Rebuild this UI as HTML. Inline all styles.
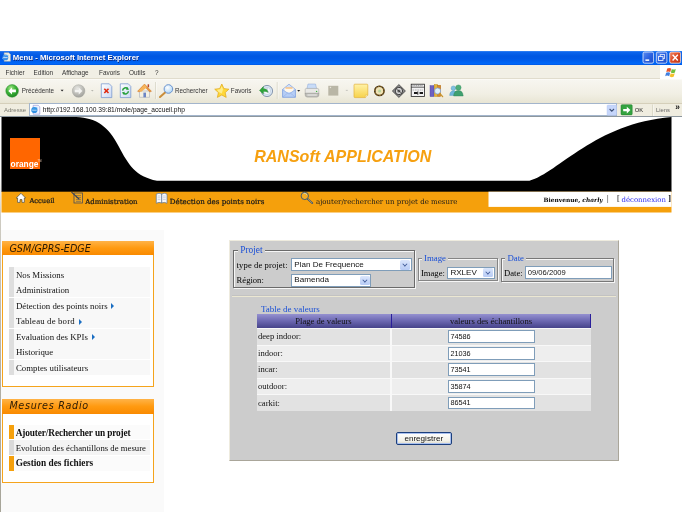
<!DOCTYPE html>
<html lang="fr">
<head>
<meta charset="utf-8">
<title>Menu - Microsoft Internet Explorer</title>
<style>
html,body{margin:0;padding:0;}
body{width:682px;height:512px;position:relative;overflow:hidden;background:#fff;font-family:"Liberation Sans",sans-serif;}
.a{position:absolute;white-space:nowrap;line-height:1;}
.sans{font-family:"Liberation Sans","DejaVu Sans",sans-serif;}
.serif{font-family:"Liberation Serif","DejaVu Serif",serif;}
#titlebar{left:0;top:50.5px;width:682px;height:14.9px;background:linear-gradient(#3a86f4 0,#0b64ec 1.5px,#0057e2 5px,#0059e6 8px,#0066f6 12px,#0068fa 13px,#0046cc 14.5px);}
#menubar{left:0;top:65.4px;width:682px;height:13.6px;background:#f1efe5;border-bottom:1px solid #e0dccd;box-sizing:border-box;}
#toolbar{left:0;top:79px;width:682px;height:24px;background:linear-gradient(#f7f6f0,#f1efe4 60%,#e8e5d4);border-top:1px solid #fbfaf6;box-sizing:border-box;}
#addrbar{left:0;top:103px;width:682px;height:14px;background:#f0ede0;border-top:1px solid #d5cfba;box-sizing:border-box;}
.mi{font-size:6.4px;color:#333;top:69.7px;}
.tb{font-size:6.3px;color:#333;top:88.4px;}

.nav{font-family:"DejaVu Serif","Liberation Serif",serif;font-size:7px;font-weight:normal;color:#1a1a1a;top:197.5px;-webkit-text-stroke:0.22px #1a1a1a;}
.box{border:1.2px solid #f5a41c;background:#fff;box-sizing:border-box;}
.boxh{background:linear-gradient(#ffb347 0,#ff9a10 50%,#f98a00 100%);}
.hand{font-family:"DejaVu Sans","Liberation Sans",sans-serif;font-style:italic;font-size:9.6px;color:#2a1a05;}
.sm{font-size:8.8px;color:#111;}
.arr{display:inline-block;width:0;height:0;margin-left:1.5px;border-left:3.2px solid #1b6ec2;border-top:3px solid transparent;border-bottom:3px solid transparent;vertical-align:-0.5px;}

.fs{border:1px solid #6a6a6a;box-shadow:1px 1px 0 #f6f6f6, inset 1px 1px 0 #f6f6f6;box-sizing:border-box;}
.lg{font-size:8.8px;color:#1a4fd6;background:#cccccc;padding:0 2px;}
.fl{font-size:8.6px;color:#000;}
.sel,.inp{background:#fff;border:1px solid #7f9db9;box-sizing:border-box;overflow:hidden;}
.st{position:absolute;left:1.8px;top:1.8px;font-family:"Liberation Sans",sans-serif;font-size:7.3px;color:#111;line-height:1;}
.sb{position:absolute;right:0.5px;top:0.5px;bottom:0.5px;width:10px;background:linear-gradient(#dbe6fb,#b7cbf5);border-radius:1.5px;}
.sb:after{content:"";position:absolute;left:3px;top:2.3px;width:2.8px;height:2.8px;border-right:1.2px solid #3a5594;border-bottom:1.2px solid #3a5594;transform:rotate(45deg) scale(0.9);}
.th{top:317px;font-size:8.6px;color:#111;text-align:center;}
.td{left:258px;font-size:8.6px;color:#111;}
.btn{background:linear-gradient(#fff,#f3f2ea 70%,#dcd8c8);border:1px solid #1c3f7c;border-radius:2px;box-sizing:border-box;box-shadow:inset 0 0 0 1px #a8c0f0;}
.btn span{position:absolute;left:0;right:0;top:1.8px;text-align:center;font-family:"Liberation Sans",sans-serif;font-size:8.1px;color:#111;line-height:1;}
#wrap{position:absolute;left:0;top:0;width:682px;height:512px;overflow:hidden;will-change:transform;transform:translateZ(0);}
</style>
</head>
<body>
<div id="wrap">
<!-- ============ IE chrome ============ -->
<div class="a" id="titlebar"></div>
<div class="a sans" style="left:12.8px;top:54.1px;font-size:7.75px;font-weight:bold;color:#fff;text-shadow:0.5px 0.5px 0 #0a2a80;">Menu - Microsoft Internet Explorer</div>
<div class="a" id="menubar"></div>
<div class="a sans mi" style="left:5.5px">Fichier</div>
<div class="a sans mi" style="left:33.6px">Edition</div>
<div class="a sans mi" style="left:62px">Affichage</div>
<div class="a sans mi" style="left:99px">Favoris</div>
<div class="a sans mi" style="left:129px">Outils</div>
<div class="a sans mi" style="left:155px">?</div>
<div class="a" style="left:660px;top:65px;width:22px;height:14px;background:#fff;"></div>
<div class="a" id="toolbar"></div>
<div class="a sans tb" style="left:21.8px">Précédente</div>
<div class="a sans tb" style="left:175px">Rechercher</div>
<div class="a sans tb" style="left:230.8px">Favoris</div>
<div class="a" id="addrbar"></div>
<div class="a sans" style="left:4px;top:107px;font-size:6px;color:#7a7a70;">Adresse</div>
<div class="a" style="left:29px;top:103.4px;width:588px;height:12.8px;background:#fff;border:1px solid #a3b5cc;box-sizing:border-box;"></div>
<div class="a sans" style="left:42.8px;top:106.6px;font-size:6.65px;color:#111;">http://192.168.100.39:81/mole/page_accueil.php</div>
<div class="a sans" style="left:634.8px;top:108.2px;font-size:5.8px;color:#222;">OK</div>
<div class="a sans" style="left:656px;top:108.2px;font-size:5.8px;color:#666;">Liens</div>
<div class="a sans" style="left:675.2px;top:102.6px;font-size:8.4px;font-weight:bold;color:#111;">»</div>



<!-- toolbar icons -->
<svg class="a" style="left:0;top:79px" width="682" height="38" viewBox="0 79 682 38">
  <defs>
    <radialGradient id="gback" cx="40%" cy="30%" r="70%"><stop offset="0" stop-color="#a8e88a"/><stop offset="0.5" stop-color="#3fb53a"/><stop offset="1" stop-color="#1f8a24"/></radialGradient>
    <radialGradient id="gfwd" cx="40%" cy="30%" r="70%"><stop offset="0" stop-color="#e6e6e2"/><stop offset="0.6" stop-color="#bdbdb8"/><stop offset="1" stop-color="#a2a29c"/></radialGradient>
    <linearGradient id="gpage" x1="0" y1="0" x2="1" y2="1"><stop offset="0" stop-color="#fff"/><stop offset="1" stop-color="#c9d8f5"/></linearGradient>
    <linearGradient id="gnote" x1="0" y1="0" x2="0" y2="1"><stop offset="0" stop-color="#fff2a8"/><stop offset="1" stop-color="#f7d24a"/></linearGradient>
    <radialGradient id="glens" cx="40%" cy="35%" r="70%"><stop offset="0" stop-color="#fff"/><stop offset="1" stop-color="#a9d3f5"/></radialGradient>
  </defs>
  <!-- back -->
  <circle cx="12.1" cy="90.9" r="6.3" fill="url(#gback)" stroke="#2c8a2c" stroke-width="0.5"/>
  <path d="M8.3,90.9 L12,87.4 L12,89.6 L15.9,89.6 L15.9,92.2 L12,92.2 L12,94.4 Z" fill="#fff"/>
  <path d="M60.6,89.8 h3 l-1.5,1.8 z" fill="#222"/>
  <!-- forward -->
  <circle cx="78.6" cy="91" r="6.3" fill="url(#gfwd)" stroke="#a6a6a0" stroke-width="0.5"/>
  <path d="M82.4,91 L78.7,87.5 L78.7,89.7 L74.8,89.7 L74.8,92.3 L78.7,92.3 L78.7,94.5 Z" fill="#f4f4f2"/>
  <path d="M91,90 h2.6 l-1.3,1.5 z" fill="#b5b5ad"/>
  <!-- stop -->
  <path d="M101.3,83.8 h8 l2.5,2.6 v11.2 h-10.5 z" fill="url(#gpage)" stroke="#6d8fcc" stroke-width="0.7"/>
  <path d="M104.3,88.8 l4.2,4.2 M108.5,88.8 l-4.2,4.2" stroke="#e02a10" stroke-width="1.6"/>
  <!-- refresh -->
  <path d="M120.3,83.8 h8 l2.5,2.6 v11.2 h-10.5 z" fill="url(#gpage)" stroke="#6d8fcc" stroke-width="0.7"/>
  <path d="M122.6,90.6 a3,3 0 0 1 5.2,-1.8 M128.4,91.2 a3,3 0 0 1 -5.2,1.8" fill="none" stroke="#27a03a" stroke-width="1.5"/>
  <path d="M127,87 l2.2,2.4 l-3,0.6 z M124,94.8 l-2.2,-2.4 l3,-0.6 z" fill="#27a03a"/>
  <!-- home -->
  <path d="M139.5,91 h10 v6.3 h-10 z" fill="#f4f1e4" stroke="#9aa0b0" stroke-width="0.5"/>
  <path d="M137.5,91.3 L144.5,84 L151.5,91.3 L149.8,92 L144.5,86.6 L139.2,92 Z" fill="#e9953a" stroke="#c36a1c" stroke-width="0.4"/>
  <path d="M138.4,91 L144.5,84.6 L147,87.2 L141,92 Z" fill="#f6b45a"/>
  <rect x="143.4" y="92.6" width="2.6" height="4.7" fill="#6d86c4"/>
  <rect x="147.6" y="84.3" width="1.5" height="3" fill="#b8482a"/>
  <path d="M155.5,82 v17" stroke="#c9c5b2" stroke-width="0.7"/>
  <path d="M156.2,82 v17" stroke="#fff" stroke-width="0.6"/>
  <!-- search -->
  <path d="M165.4,92.2 L160,97" stroke="#c98d3a" stroke-width="2" stroke-linecap="round"/>
  <circle cx="168.4" cy="89" r="4.3" fill="url(#glens)" stroke="#6a93cf" stroke-width="1"/>
  <!-- star -->
  <path d="M221.8,84 L223.9,88.6 L228.9,89.2 L225.2,92.6 L226.2,97.4 L221.8,95 L217.4,97.4 L218.4,92.6 L214.7,89.2 L219.7,88.6 Z" fill="#ffd83a" stroke="#e0a818" stroke-width="0.7" stroke-linejoin="round"/>
  <path d="M221.8,86 L223,89.4 L221.8,93.5 L218.6,92 L217,89.8 L220.3,89.3 Z" fill="#fff2a0" opacity="0.8"/>
  <!-- history/media -->
  <circle cx="267" cy="91" r="5.6" fill="#d8e6f4" stroke="#7d8fa8" stroke-width="0.9"/>
  <circle cx="267" cy="91" r="3.6" fill="#f4f8fc" stroke="#9fb0c8" stroke-width="0.4"/>
  <path d="M267,88.2 V91 L269,92.4" stroke="#6c7f9c" stroke-width="0.6" fill="none"/>
  <path d="M259.4,90.4 L263.4,86.6 L263.4,88.8 Q267.4,88.4 267.8,92.4 Q266,90.9 263.4,91.6 L263.4,94 Z" fill="#2fa53a" stroke="#1c7f28" stroke-width="0.3"/>
  <path d="M277.3,82 v17" stroke="#c9c5b2" stroke-width="0.7"/>
  <path d="M278,82 v17" stroke="#fff" stroke-width="0.6"/>
  <!-- mail -->
  <path d="M282.6,89.4 L289,84.2 L295.4,89.4 V97.2 H282.6 Z" fill="#cfe0fa" stroke="#7f9fdc" stroke-width="0.7" stroke-linejoin="round"/>
  <path d="M284.6,88 h8.8 v4 h-8.8 z" fill="#fff8ec"/>
  <path d="M285.5,87.2 h7 v1.6 h-7 z" fill="#f6c48a"/>
  <path d="M282.6,89.6 L289,94 L295.4,89.6 V97.2 H282.6 Z" fill="#b6cef6" stroke="#7f9fdc" stroke-width="0.6" stroke-linejoin="round"/>
  <path d="M282.8,97 L287.6,93.1 M295.2,97 L290.4,93.1" stroke="#8eaae2" stroke-width="0.5"/>
  <path d="M297.2,90 h3 l-1.5,1.8 z" fill="#222"/>
  <!-- printer -->
  <path d="M308,84 h7.5 l1.2,5 h-9.8 z" fill="#c9dcf7" stroke="#88a4d6" stroke-width="0.5"/>
  <path d="M305.2,89.6 q0,-1.2 1.4,-1.2 h10.6 q1.6,0 1.6,1.4 v4 h-13.6 z" fill="#e9e9e6" stroke="#9c9c98" stroke-width="0.5"/>
  <path d="M305.2,93.2 h13.6 v2 q0,1.6 -2,1.9 h-9.4 q-2.2,-0.2 -2.2,-2 z" fill="#bdbdb8" stroke="#8e8e8a" stroke-width="0.5"/>
  <path d="M307.4,95 h9.4" stroke="#f6f6f4" stroke-width="0.9"/>
  <circle cx="316.6" cy="91.4" r="0.7" fill="#40b040"/>
  <!-- edit (disabled) -->
  <rect x="328.3" y="85.8" width="10" height="9.8" fill="#b9b6a6"/>
  <rect x="329.8" y="86.8" width="1.3" height="1.3" fill="#e8e6dc"/>
  <path d="M345.8,90.4 h2" stroke="#b5b5ad" stroke-width="0.7"/>
  <!-- note -->
  <path d="M354.8,84.2 h12.2 q0.8,0 0.8,0.8 v10.2 l-2.4,2.4 h-10.6 q-0.8,0 -0.8,-0.8 v-11.8 q0,-0.8 0.8,-0.8 z" fill="url(#gnote)" stroke="#e2b23a" stroke-width="0.7"/>
  <path d="M365.4,97.4 v-2.2 h2.3" fill="#fffbe0" stroke="#d8a830" stroke-width="0.4"/>
  <!-- round -->
  <circle cx="379.4" cy="90.9" r="5.4" fill="#3a2a14"/>
  <circle cx="379.4" cy="90.9" r="3.8" fill="#efe2b4"/>
  <circle cx="379.4" cy="90.9" r="4.6" fill="none" stroke="#b88a2a" stroke-width="0.9" stroke-dasharray="1.6 1.2"/>
  <circle cx="379.6" cy="91" r="1.5" fill="#b5d6a0"/>
  <!-- diamond -->
  <path d="M398.9,84.6 L405.4,91 L398.9,97.4 L392.4,91 Z" fill="#8e8e8e" stroke="#3c3c3c" stroke-width="0.8"/>
  <circle cx="398.9" cy="91" r="3.7" fill="#d4d4d4" stroke="#2e2e2e" stroke-width="0.9"/>
  <circle cx="398.9" cy="91" r="1.6" fill="#666"/>
  <path d="M396,88.6 L401.8,93.4" stroke="#222" stroke-width="0.6"/>
  <!-- calendar-ish -->
  <rect x="411.2" y="84.2" width="13.2" height="12.2" fill="#f2f2f2" stroke="#222" stroke-width="0.8"/>
  <path d="M411.2,87.2 h13.2" stroke="#222" stroke-width="0.7"/>
  <path d="M412.4,85.7 h10.8" stroke="#8a8a8a" stroke-width="0.9" stroke-dasharray="1.2 0.6"/>
  <path d="M412.6,90 h10.4" stroke="#9a9a9a" stroke-width="0.7" stroke-dasharray="1.6 0.8"/>
  <path d="M414,93 h3.6 M419.6,93 h3.4" stroke="#1a1a1a" stroke-width="2"/>
  <path d="M417.8,91.4 v3.4" stroke="#1a1a1a" stroke-width="0.8"/>
  <!-- research (books+lens) -->
  <rect x="430" y="85.6" width="4" height="11" fill="#6e62c2" stroke="#4a3f9c" stroke-width="0.4"/>
  <rect x="434.2" y="84.4" width="3.4" height="12.2" fill="#e4b43a" stroke="#b98a1c" stroke-width="0.4"/>
  <rect x="437.8" y="85.2" width="3" height="11.4" fill="#d98a2a" stroke="#a8661a" stroke-width="0.4"/>
  <circle cx="437.6" cy="91" r="3.1" fill="#dff0fc" stroke="#7f9cc8" stroke-width="0.8"/>
  <path d="M439.8,93.4 L442.6,96.6" stroke="#c9962e" stroke-width="1.4" stroke-linecap="round"/>
  <!-- messenger -->
  <circle cx="453.4" cy="88.2" r="2.3" fill="#7fc0e0" stroke="#4f94b8" stroke-width="0.4"/>
  <path d="M449.6,95.4 q0.4,-4.6 3.8,-4.6 q3.4,0 3.8,4.6 z" fill="#6fb6da" stroke="#4f94b8" stroke-width="0.4"/>
  <circle cx="458.4" cy="87.6" r="2.7" fill="#4fae7a" stroke="#2f8a5a" stroke-width="0.4"/>
  <path d="M453.6,96 q0.4,-5.4 4.8,-5.4 q4.4,0 4.8,5.4 z" fill="#3fa070" stroke="#2a8054" stroke-width="0.4"/>
  <!-- address bar icons -->
  <path d="M33.2,105.3 h5 l1.6,1.6 v7.3 h-6.6 z" fill="#eef2ff" stroke="#8f8fd2" stroke-width="0.6"/>
  <circle cx="34.4" cy="110" r="3.1" fill="#2f8fe2"/>
  <path d="M32,110.2 h4.6" stroke="#d8ecfb" stroke-width="0.8"/>
  <path d="M31.4,111.6 q2.6,-5 6.2,-3.6" stroke="#5ab0f0" stroke-width="0.6" fill="none"/>
  <rect x="607" y="105" width="9.5" height="10.2" rx="1" fill="#c6d6fb" stroke="#b3c6f3" stroke-width="0.4"/>
  <path d="M609.6,109 l2.2,2.2 l2.2,-2.2" stroke="#40547a" stroke-width="1.1" fill="none"/>
  <rect x="621" y="104.7" width="11.2" height="10.2" rx="1" fill="#34a340" stroke="#1e7a2a" stroke-width="0.5"/>
  <path d="M623.2,109 h3.6 v-2.2 l3.6,3.3 l-3.6,3.3 v-2.2 h-3.6 z" fill="#fff"/>
  <path d="M652.8,104.5 v11.5" stroke="#c9c5b2" stroke-width="0.7"/>
  <path d="M653.5,104.5 v11.5" stroke="#fff" stroke-width="0.6"/>
</svg>
<!-- title bar icons -->
<svg class="a" style="left:0;top:50px" width="682" height="30" viewBox="0 50 682 30">
  <defs>
    <linearGradient id="gbtn" x1="0" y1="0" x2="1" y2="1"><stop offset="0" stop-color="#5a8df2"/><stop offset="0.5" stop-color="#2c62e0"/><stop offset="1" stop-color="#1f4ec8"/></linearGradient>
    <linearGradient id="gclose" x1="0" y1="0" x2="1" y2="1"><stop offset="0" stop-color="#ee8a6a"/><stop offset="0.5" stop-color="#dc4a24"/><stop offset="1" stop-color="#b8341a"/></linearGradient>
  </defs>
  <rect x="643" y="52" width="10.6" height="11.2" rx="1.6" fill="url(#gbtn)" stroke="#fff" stroke-width="0.7"/>
  <rect x="645.4" y="59.4" width="3.8" height="1.5" fill="#fff"/>
  <rect x="656.3" y="52" width="10.6" height="11.2" rx="1.6" fill="url(#gbtn)" stroke="#fff" stroke-width="0.7"/>
  <rect x="660.2" y="54.6" width="4.4" height="3.8" fill="none" stroke="#e8eefc" stroke-width="0.8"/>
  <rect x="658.6" y="56.6" width="4.4" height="3.8" fill="#2c62e0" stroke="#fff" stroke-width="0.8"/>
  <rect x="669.7" y="52" width="10.9" height="11.2" rx="1.6" fill="url(#gclose)" stroke="#fff" stroke-width="0.7"/>
  <path d="M672.6,54.8 l5.2,5.6 M677.8,54.8 l-5.2,5.6" stroke="#fff" stroke-width="1.4"/>
  <!-- IE icon in title -->
  <path d="M4.2,52.8 h4.6 l1.6,1.6 v6.9 h-6.2 z" fill="#f4f1e4" stroke="#bfb9a0" stroke-width="0.5"/>
  <circle cx="5.4" cy="57.4" r="2.9" fill="#3a8fe8"/>
  <path d="M3,57.6 h4.6" stroke="#e4f0fc" stroke-width="0.8"/>
  <path d="M2.2,59 q2.6,-5 6.6,-3.6" stroke="#7cc0f6" stroke-width="0.6" fill="none"/>
  <!-- windows flag -->
  <path d="M667.2,68.6 q2,-1.2 4,0 l-0.9,3.4 q-2,-1.2 -4,0 z" fill="#e8532a"/>
  <path d="M671.8,69 q2,1.2 4,0 l-0.9,3.4 q-2,1.2 -4,0 z" fill="#6fbf3a"/>
  <path d="M666.1,72.8 q2,-1.2 4,0 l-0.9,3.4 q-2,-1.2 -4,0 z" fill="#3f7fe0"/>
  <path d="M670.7,73.2 q2,1.2 4,0 l-0.9,3.4 q-2,1.2 -4,0 z" fill="#f4c02a"/>
</svg>
<!-- ============ page ============ -->
<div class="a" style="left:0;top:116px;width:682px;height:1.2px;background:#8d979e;z-index:5;"></div>
<div class="a" id="page" style="left:0;top:117px;width:682px;height:395px;background:#fff;"></div>
<div class="a" style="left:0;top:229.8px;width:164px;height:283px;background:#fafafa;"></div>
<div class="a" style="left:0;top:117px;width:1.4px;height:395px;background:linear-gradient(#fff 0,#fff 60px,#cfccc2 100px,#b4b1a6 250px,#a6a498 395px);"></div>
<svg class="a" style="left:0;top:117px" width="682" height="96" viewBox="0 117 682 96">
  <path d="M1.5,117 L76,117 C97.5,118 108.5,127 118.5,146 S135.5,176.5 157,180.8 L529.5,180.8 C559,172.2 594.7,123.6 671.5,117 L671.5,192 L1.5,192 Z" fill="#000"/>
  <rect x="1.5" y="191.7" width="670" height="20.8" fill="#f5a00c"/>
  <rect x="488.5" y="191.7" width="183" height="15.2" fill="#fff"/>
  <rect x="10" y="138" width="30" height="31" fill="#ff6600"/>
</svg>
<div class="a sans" style="left:10.6px;top:160.3px;font-size:8.35px;font-weight:bold;color:#fff;">orange</div>
<div class="a sans" style="left:37.6px;top:160.6px;font-size:2.6px;color:#ffd9bf;">TM</div>
<div class="a sans" id="apptitle" style="left:254.2px;top:147.6px;font-size:16.05px;font-weight:bold;font-style:italic;color:#f6a010;">RANSoft APPLICATION</div>

<div class="a serif nav" style="left:29.4px;font-size:6.75px;top:198px;">Accueil</div>
<div class="a serif nav" style="left:85.2px;top:199px;font-size:6.95px;">Administration</div>
<div class="a serif nav" style="left:169.8px;top:197.6px;font-size:7.12px;">Détection des points noirs</div>
<div class="a serif nav" style="left:316px;top:198.3px;font-size:7.02px;-webkit-text-stroke:0;">ajouter/rechercher un projet de mesure</div>
<div class="a serif" id="bienv" style="left:543.5px;top:196.6px;font-family:'DejaVu Serif',serif;font-size:5.9px;font-weight:bold;color:#000;">Bienvenue, <i>charly</i></div>
<div class="a serif" style="left:607px;top:195.2px;font-size:8.2px;color:#000;">|</div>
<div class="a serif" style="left:617px;top:195.2px;font-size:8.2px;color:#000;">[</div>
<div class="a serif" id="deco" style="left:621.5px;top:196.5px;font-family:'DejaVu Serif',serif;font-size:6.95px;color:#2a2af0;">déconnexion</div>
<div class="a serif" style="left:668.2px;top:195.2px;font-size:8.2px;color:#000;font-weight:bold;">]</div>


<!-- nav icons -->
<svg class="a" style="left:0;top:190px" width="682" height="24" viewBox="0 190 682 24">
  <!-- home -->
  <path d="M16.2,198 L21,193.3 L25.6,198 L24.3,198 L24.3,202.4 L22,202.4 L22,199.6 L20,199.6 L20,202.4 L17.6,202.4 L17.6,198 Z" fill="#fff" stroke="#4a4a40" stroke-width="0.7" stroke-linejoin="round"/>
  <!-- admin notepad -->
  <rect x="74" y="193" width="8.4" height="10" fill="#f2a820" stroke="#4a4a52" stroke-width="0.8"/>
  <path d="M76,195.6h5M76,197.6h5M76,199.6h5M76,201.4h5" stroke="#5a5a60" stroke-width="0.6"/>
  <path d="M71.8,192.4 L79,199" stroke="#33405c" stroke-width="1.1" stroke-linecap="round"/>
  <!-- book -->
  <path d="M156.3,194.2 Q159,192.4 161.7,194 Q164.5,192.4 167,194.2 L167,203.3 Q164.4,201.6 161.7,203 Q159,201.6 156.3,203.3 Z" fill="#fbfbfd" stroke="#5b7aa0" stroke-width="0.7" stroke-linejoin="round"/>
  <path d="M161.7,194 L161.7,203" stroke="#4a6488" stroke-width="0.8"/>
  <path d="M157.6,196h2.8M157.6,197.8h2.8M157.6,199.6h2.8M163,196h2.8M163,197.8h2.8M163,199.6h2.8" stroke="#a9b7c9" stroke-width="0.6"/>
  <!-- magnifier -->
  <circle cx="304.8" cy="195.9" r="3.7" fill="#f5ab22" stroke="#2f5278" stroke-width="0.9"/>
  <path d="M303.6,193.4 Q305.6,192.8 307,194.8" stroke="#b8dcf5" stroke-width="0.7" fill="none"/>
  <path d="M307.6,198.8 L312.3,203.2" stroke="#2f5278" stroke-width="1.7" stroke-linecap="round"/>
  <path d="M307.9,199 L312,202.9" stroke="#e9b860" stroke-width="0.6" stroke-linecap="round"/>
</svg>
<!-- sidebar 1 -->
<div class="a box" style="left:1.6px;top:241.2px;width:152.4px;height:145.8px;"></div>
<div class="a boxh" style="left:1.6px;top:241.2px;width:152.4px;height:14px;"></div>
<div class="a hand" style="left:9.4px;top:243.9px;">GSM/GPRS-EDGE</div>
<div class="a" style="left:8.8px;top:266.60px;width:5.3px;height:15.1px;background:#dedede;"></div>
<div class="a" style="left:14.1px;top:266.60px;width:136px;height:15.1px;background:#f8f8f8;"></div>
<div class="a" style="left:8.8px;top:282.15px;width:5.3px;height:15.1px;background:#dedede;"></div>
<div class="a" style="left:14.1px;top:282.15px;width:136px;height:15.1px;background:#f8f8f8;"></div>
<div class="a" style="left:8.8px;top:297.70px;width:5.3px;height:15.1px;background:#dedede;"></div>
<div class="a" style="left:14.1px;top:297.70px;width:136px;height:15.1px;background:#f8f8f8;"></div>
<div class="a" style="left:8.8px;top:313.25px;width:5.3px;height:15.1px;background:#dedede;"></div>
<div class="a" style="left:14.1px;top:313.25px;width:136px;height:15.1px;background:#f8f8f8;"></div>
<div class="a" style="left:8.8px;top:328.80px;width:5.3px;height:15.1px;background:#dedede;"></div>
<div class="a" style="left:14.1px;top:328.80px;width:136px;height:15.1px;background:#f8f8f8;"></div>
<div class="a" style="left:8.8px;top:344.35px;width:5.3px;height:15.1px;background:#dedede;"></div>
<div class="a" style="left:14.1px;top:344.35px;width:136px;height:15.1px;background:#f8f8f8;"></div>
<div class="a" style="left:8.8px;top:359.90px;width:5.3px;height:15.1px;background:#dedede;"></div>
<div class="a" style="left:14.1px;top:359.90px;width:136px;height:15.1px;background:#f8f8f8;"></div>
<div class="a serif sm" style="left:16px;top:270.5px;">Nos Missions</div>
<div class="a serif sm" style="left:16px;top:286px;">Administration</div>
<div class="a serif sm" style="left:16px;top:301.5px;">Détection des points noirs <span class="arr"></span></div>
<div class="a serif sm" style="left:16px;top:317px;letter-spacing:0.15px;">Tableau de bord <span class="arr"></span></div>
<div class="a serif sm" style="left:16px;top:332.5px;">Evaluation des KPIs <span class="arr"></span></div>
<div class="a serif sm" style="left:16px;top:348px;">Historique</div>
<div class="a serif sm" style="left:16px;top:363.5px;">Comptes utilisateurs</div>

<!-- sidebar 2 -->
<div class="a box" style="left:1.6px;top:399px;width:152.4px;height:84.3px;"></div>
<div class="a boxh" style="left:1.6px;top:399px;width:152.4px;height:14.8px;"></div>
<div class="a hand" style="left:9.4px;top:401.3px;letter-spacing:0.7px;">Mesures Radio</div>
<div class="a" style="left:14.1px;top:424.9px;width:136px;height:14.4px;background:#fbfbfb;"></div>
<div class="a" style="left:14.1px;top:440.4px;width:136px;height:14.6px;background:#f4f4f4;"></div>
<div class="a" style="left:14.1px;top:456.4px;width:136px;height:14.4px;background:#fbfbfb;"></div>
<div class="a" style="left:8.7px;top:424.9px;width:5.4px;height:14.4px;background:#f5a00c;"></div>
<div class="a" style="left:8.7px;top:440.4px;width:5.4px;height:14.6px;background:#dadada;"></div>
<div class="a" style="left:8.7px;top:456.4px;width:5.4px;height:14.4px;background:#f5a00c;"></div>
<div class="a serif sm" style="left:15.7px;top:429.2px;font-weight:bold;font-size:9.3px;letter-spacing:-0.12px;">Ajouter/Rechercher un projet</div>
<div class="a serif sm" style="left:15.7px;top:444px;font-size:8.72px;">Evolution des échantillons de mesure</div>
<div class="a serif sm" style="left:15.7px;top:459.3px;font-weight:bold;font-size:9.3px;">Gestion des fichiers</div>

<!-- main panel -->
<div class="a" style="left:229px;top:240.2px;width:390px;height:220.6px;background:#cccccc;border:1px solid;border-color:#eeebde #aaa69a #aaa69a #eeebde;box-sizing:border-box;"></div>
<div class="a" style="left:232px;top:295.2px;width:383.5px;height:0.8px;background:#c2c2c2;"></div><div class="a" style="left:232px;top:296px;width:383.5px;height:1px;background:#ebe7d2;"></div>

<!-- fieldsets -->
<div class="a fs" style="left:233.4px;top:250.4px;width:181.2px;height:38px;"></div>
<div class="a serif lg" style="left:238.2px;top:245.8px;font-size:9.4px;">Projet</div>
<div class="a serif fl" style="left:236.6px;top:260.6px;letter-spacing:0.1px;">type de projet:</div>
<div class="a serif fl" style="left:236.6px;top:276.2px;">Région:</div>
<div class="a sel" style="left:291.3px;top:258.4px;width:120.3px;height:12.8px;"><span class="st" style="font-size:8.05px;top:1.6px;left:2px">Plan De Frequence</span><span class="sb"></span></div>
<div class="a sel" style="left:291.3px;top:274px;width:80px;height:12.8px;"><span class="st" style="font-size:8.1px;top:1.4px;left:2px">Bamenda</span><span class="sb"></span></div>

<div class="a fs" style="left:418px;top:257.6px;width:80px;height:23.4px;border-color:#858585;"></div>
<div class="a serif lg" style="left:422px;top:254px;">Image</div>
<div class="a serif fl" style="left:421px;top:268.5px;">Image:</div>
<div class="a sel" style="left:447.2px;top:266.5px;width:47.6px;height:12.2px;"><span class="st" style="font-size:8.1px;top:1.4px;left:2.2px">RXLEV</span><span class="sb"></span></div>

<div class="a fs" style="left:501.2px;top:257.5px;width:112.8px;height:24.2px;border-color:#787878;"></div>
<div class="a serif lg" style="left:505.4px;top:254px;">Date</div>
<div class="a serif fl" style="left:504px;top:268.5px;">Date:</div>
<div class="a inp" style="left:525px;top:266.2px;width:86.6px;height:12.8px;"><span class="st" style="font-size:7.6px;top:1.8px;left:1.8px">09/06/2009</span></div>

<!-- table -->
<div class="a serif" style="left:261px;top:304.9px;font-size:9px;color:#1a4fd6;">Table de valeurs</div>
<div class="a" style="left:256.8px;top:314.4px;width:334.2px;height:13.8px;background:linear-gradient(#9591d0 0,#6f6bb4 45%,#46438a 100%);"></div>
<div class="a" style="left:390.5px;top:314.4px;width:1.5px;height:13.8px;background:#2a1f9a;"></div>
<div class="a" style="left:589.5px;top:314.4px;width:1.5px;height:13.8px;background:#2a1f9a;"></div>
<div class="a serif th" style="left:256.5px;width:134px;">Plage de valeurs</div>
<div class="a serif th" style="left:392px;width:198px;">valeurs des échantillons</div>
<div class="a" style="left:256.8px;top:328.2px;width:334.2px;height:83px;background:#f8f8f8;"></div>
<div class="a" style="left:256.8px;top:329.0px;width:133.7px;height:15.7px;background:#e2e2e2;"></div>
<div class="a" style="left:391.5px;top:329.0px;width:199.5px;height:15.7px;background:#e2e2e2;"></div>
<div class="a" style="left:256.8px;top:345.6px;width:133.7px;height:15.7px;background:#eeeeee;"></div>
<div class="a" style="left:391.5px;top:345.6px;width:199.5px;height:15.7px;background:#eeeeee;"></div>
<div class="a" style="left:256.8px;top:362.2px;width:133.7px;height:15.7px;background:#e2e2e2;"></div>
<div class="a" style="left:391.5px;top:362.2px;width:199.5px;height:15.7px;background:#e2e2e2;"></div>
<div class="a" style="left:256.8px;top:378.8px;width:133.7px;height:15.7px;background:#eeeeee;"></div>
<div class="a" style="left:391.5px;top:378.8px;width:199.5px;height:15.7px;background:#eeeeee;"></div>
<div class="a" style="left:256.8px;top:395.4px;width:133.7px;height:15.7px;background:#e2e2e2;"></div>
<div class="a" style="left:391.5px;top:395.4px;width:199.5px;height:15.7px;background:#e2e2e2;"></div>
<div class="a serif td" style="top:332.2px;">deep indoor:</div>
<div class="a serif td" style="top:348.8px;">indoor:</div>
<div class="a serif td" style="top:365.4px;">incar:</div>
<div class="a serif td" style="top:382.0px;">outdoor:</div>
<div class="a serif td" style="top:398.6px;">carkit:</div>
<div class="a inp" style="left:447.6px;top:330.30px;width:87.4px;height:12.9px;"><span class="st">74586</span></div>
<div class="a inp" style="left:447.6px;top:346.85px;width:87.4px;height:12.9px;"><span class="st">21036</span></div>
<div class="a inp" style="left:447.6px;top:363.40px;width:87.4px;height:12.9px;"><span class="st">73541</span></div>
<div class="a inp" style="left:447.6px;top:379.95px;width:87.4px;height:12.9px;"><span class="st">35874</span></div>
<div class="a inp" style="left:447.6px;top:396.50px;width:87.4px;height:12.9px;"><span class="st">86541</span></div>

<div class="a btn" style="left:396px;top:432px;width:55.5px;height:13px;"><span>enregistrer</span></div>
</div>
</body>
</html>
